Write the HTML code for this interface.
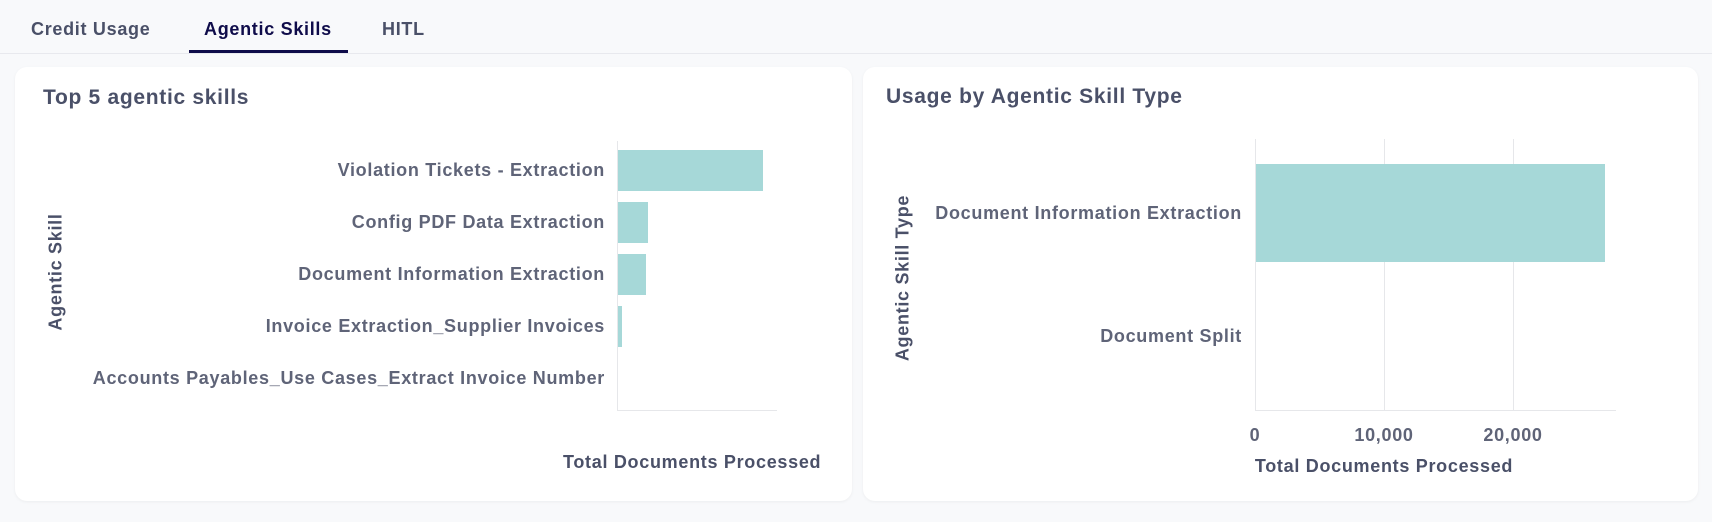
<!DOCTYPE html>
<html><head><meta charset="utf-8"><style>
*{margin:0;padding:0;box-sizing:border-box}
body{width:1712px;height:522px;background:#f8f9fb;font-family:"Liberation Sans",sans-serif;font-weight:bold;position:relative;overflow:hidden;color:#5f6478;letter-spacing:0.7px}
.a{position:absolute;white-space:nowrap}
.tab{font-size:18px;color:#4a5068;top:19px}
.card{position:absolute;top:67px;height:434px;background:#fff;border-radius:12px;box-shadow:0 1px 3px rgba(0,0,0,.05)}
.title{font-size:21px;color:#4a5068}
.lbl{font-size:18px;color:#5f6478;text-align:right}
.bar{position:absolute;background:#a6d8d8}
.ln{position:absolute;background:#e6e7ea}
</style></head><body>
<div class="a" style="left:0;top:53px;width:1712px;height:1px;background:#e8e9ee"></div>
<div class="a tab" style="left:31px">Credit Usage</div>
<div class="a tab" style="left:204px;color:#0f0c4a">Agentic Skills</div>
<div class="a" style="left:189px;top:50px;width:159px;height:3px;background:#0f0c4a"></div>
<div class="a tab" style="left:382px">HITL</div>

<div class="card" style="left:15px;width:837px"></div>
<div class="card" style="left:863px;width:835px"></div>

<div class="a title" style="left:43px;top:86px">Top 5 agentic skills</div>
<div class="ln" style="left:617px;top:141px;width:1px;height:270px"></div>
<div class="ln" style="left:617px;top:410px;width:160px;height:1px"></div>
<div class="bar" style="left:618px;top:150px;width:145px;height:41px"></div>
<div class="bar" style="left:618px;top:202px;width:30px;height:41px"></div>
<div class="bar" style="left:618px;top:254px;width:28px;height:41px"></div>
<div class="bar" style="left:618px;top:306px;width:4px;height:41px"></div>
<div class="a lbl" style="right:1107px;top:160px">Violation Tickets - Extraction</div>
<div class="a lbl" style="right:1107px;top:212px">Config PDF Data Extraction</div>
<div class="a lbl" style="right:1107px;top:264px">Document Information Extraction</div>
<div class="a lbl" style="right:1107px;top:316px">Invoice Extraction_Supplier Invoices</div>
<div class="a lbl" style="right:1107px;top:368px">Accounts Payables_Use Cases_Extract Invoice Number</div>
<div class="a" style="left:56px;top:272px;font-size:18px;color:#4a5068;transform:translate(-50%,-50%) rotate(-90deg)">Agentic Skill</div>
<div class="a" style="left:563px;top:452px;width:263px;overflow:hidden;font-size:18px;color:#4a5068">Total Documents Processed</div>

<div class="a title" style="left:886px;top:85px">Usage by Agentic Skill Type</div>
<div class="ln" style="left:1255px;top:139px;width:1px;height:272px"></div>
<div class="ln" style="left:1384px;top:139px;width:1px;height:272px"></div>
<div class="ln" style="left:1513px;top:139px;width:1px;height:272px"></div>
<div class="ln" style="left:1255px;top:410px;width:361px;height:1px"></div>
<div class="bar" style="left:1256px;top:164px;width:349px;height:98px"></div>
<div class="a lbl" style="right:470px;top:203px">Document Information Extraction</div>
<div class="a lbl" style="right:470px;top:326px">Document Split</div>
<div class="a lbl" style="left:1255px;top:425px;transform:translateX(-50%)">0</div>
<div class="a lbl" style="left:1384px;top:425px;transform:translateX(-50%)">10,000</div>
<div class="a lbl" style="left:1513px;top:425px;transform:translateX(-50%)">20,000</div>
<div class="a" style="left:1384px;top:456px;transform:translateX(-50%);font-size:18px;color:#4a5068">Total Documents Processed</div>
<div class="a" style="left:903px;top:278px;font-size:18px;color:#4a5068;transform:translate(-50%,-50%) rotate(-90deg)">Agentic Skill Type</div>
</body></html>
